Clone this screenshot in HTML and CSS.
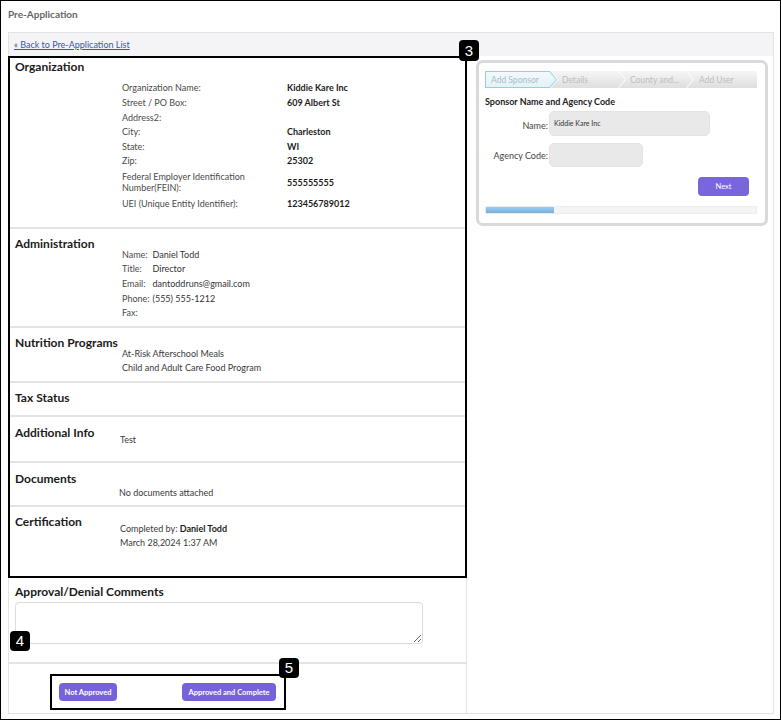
FILE: index.html
```html
<!DOCTYPE html>
<html lang="en">
<head>
<meta charset="utf-8">
<title>Pre-Application</title>
<link rel="stylesheet" href="styles.css">
</head>
<body>
<div class="frame">
  <h1 class="page-title">Pre-Application</h1>
  <div class="content">
    <div class="topbar"><a class="back-link" href="#">« Back to Pre-Application List</a></div>
    <div class="main">
      <div class="left">
        <div class="review">
          <section class="section s-org">
            <h2 class="section-title st-org">Organization</h2>
            <div class="section-body sb-org">
              <div class="kv">
                <div class="k">Organization Name:</div><div class="v">Kiddie Kare Inc</div>
                <div class="k">Street / PO Box:</div><div class="v">609 Albert St</div>
                <div class="k">Address2:</div><div class="v"></div>
                <div class="k">City:</div><div class="v">Charleston</div>
                <div class="k">State:</div><div class="v">WI</div>
                <div class="k">Zip:</div><div class="v">25302</div>
                <div class="k k-wrap">Federal Employer Identification Number(FEIN):</div><div class="v">555555555</div>
                <div class="k">UEI (Unique Entity Identifier):</div><div class="v">123456789012</div>
              </div>
            </div>
          </section>
          <section class="section s-admin">
            <h2 class="section-title">Administration</h2>
            <div class="section-body sb-admin">
              <div class="pairs">
                <div class="pk">Name:</div><div class="pv">Daniel Todd</div>
                <div class="pk">Title:</div><div class="pv">Director</div>
                <div class="pk">Email:</div><div class="pv">dantoddruns@gmail.com</div>
                <div class="pk">Phone:</div><div class="pv">(555) 555-1212</div>
                <div class="pk">Fax:</div><div class="pv"></div>
              </div>
            </div>
          </section>
          <section class="section s-nutr">
            <h2 class="section-title">Nutrition Programs</h2>
            <div class="section-body sb-nutr">
              <div class="line">At-Risk Afterschool Meals</div>
              <div class="line">Child and Adult Care Food Program</div>
            </div>
          </section>
          <section class="section s-tax">
            <h2 class="section-title">Tax Status</h2>
          </section>
          <section class="section s-addl">
            <h2 class="section-title st-low">Additional Info</h2>
            <div class="section-body sb-addl">
              <div class="line">Test</div>
            </div>
          </section>
          <section class="section s-docs">
            <h2 class="section-title st-low">Documents</h2>
            <div class="section-body sb-docs">
              <div class="line">No documents attached</div>
            </div>
          </section>
          <section class="section s-cert">
            <h2 class="section-title">Certification</h2>
            <div class="section-body sb-cert">
              <div class="cert-line">Completed by: <b>Daniel Todd</b></div>
              <div class="cert-line">March 28,2024 1:37 AM</div>
            </div>
          </section>
        </div>
        <h2 class="comments-title">Approval/Denial Comments</h2>
        <textarea class="comments"></textarea>
        <div class="divider"></div>
        <div class="actions">
          <button class="btn btn-deny">Not Approved</button>
          <button class="btn btn-approve">Approved and Complete</button>
        </div>
      </div>
      <div class="right">
        <div class="wizard">
          <div class="steps">
            <div class="step step-first step-active"><span>Add Sponsor</span></div>
            <div class="step step-mid"><span>Details</span></div>
            <div class="step step-mid"><span>County and...</span></div>
            <div class="step step-last"><span>Add User</span></div>
          </div>
          <h3 class="wiz-title">Sponsor Name and Agency Code</h3>
          <div class="form-row">
            <label class="form-label">Name:</label>
            <input class="field field-name" type="text" value="Kiddie Kare Inc">
          </div>
          <div class="form-row form-row-2">
            <label class="form-label">Agency Code:</label>
            <input class="field field-code" type="text" value="">
          </div>
          <div class="wiz-actions"><button class="btn btn-next">Next</button></div>
          <div class="progress"><div class="progress-fill"></div></div>
        </div>
      </div>
    </div>
  </div>
  <div class="badge badge-3">3</div>
  <div class="badge badge-4">4</div>
  <div class="badge badge-5">5</div>
</div>
</body>
</html>
```
FILE: styles.css
```css
* { box-sizing: border-box; }
html, body { margin: 0; padding: 0; background: #fff; }
body { font-family: Lato, "Open Sans", sans-serif; color: #333; }

.frame {
  position: relative;
  width: 781px;
  height: 720px;
  border: 1px solid #000;
  background: #fff;
  overflow: hidden;
}

.page-title {
  height: 31px;
  margin: 0;
  padding: 7px 0 0 7px;
  font-size: 10px;
  line-height: 12px;
  font-weight: 700;
  color: #666;
}

.content {
  margin-left: 7px;
  width: 766px;
  height: 682px;
  border: 1px solid #e3e3e3;
  background: #f4f4f6;
  display: flex;
  flex-direction: column;
}

.topbar {
  height: 23px;
  flex: none;
  padding-left: 5px;
  display: flex;
  align-items: center;
}
.back-link {
  font-size: 9px;
  color: #3a58a3;
  text-decoration: underline;
}

.main {
  flex: 1;
  display: flex;
  background: #fff;
  min-height: 0;
}

.left {
  width: 458px;
  flex: none;
  border-right: 1px solid #e3e3e3;
  display: flex;
  flex-direction: column;
}
.right { flex: 1; }

/* review box */
.review {
  margin-left: -1px;
  width: 459px;
  height: 522px;
  flex: none;
  border: 2px solid #000;
}
.section {
  display: flex;
  border-bottom: 2px solid #e4e4e4;
}
.section:last-child { border-bottom: none; }
.s-org { height: 171px; }
.s-admin { height: 99px; }
.s-nutr { height: 55px; }
.s-tax { height: 34px; }
.s-addl { height: 46px; }
.s-docs { height: 44px; }
.s-cert { height: 69px; }

.section-title {
  width: 112px;
  flex: none;
  margin: 0;
  padding: 7px 0 0 5px;
  font-size: 12px;
  line-height: 16px;
  font-weight: 700;
  color: #1a1a1a;
  white-space: nowrap;
}
.st-org { padding-top: 1px; }
.st-low { padding-top: 8px; }

.section-body {
  font-size: 9px;
  color: #444;
}
.sb-org { padding-top: 22.7px; }
.sb-admin { padding-top: 18.6px; }
.sb-nutr { padding-top: 18.6px; }
.sb-addl { padding-top: 15.6px; margin-left: -2px; }
.sb-docs { padding-top: 22.6px; margin-left: -3px; }
.sb-cert { padding-top: 14.5px; margin-left: -2px; }

.kv {
  display: grid;
  grid-template-columns: 150px auto;
  column-gap: 15px;
  align-items: center;
}
.k {
  line-height: 11px;
  padding: 1.8px 0;
  color: #4a4a4a;
}
.k-wrap { padding: 3px 0; }
.v {
  line-height: 11px;
  font-weight: 700;
  color: #1c1c1c;
}

.pairs {
  display: grid;
  grid-template-columns: auto auto;
  column-gap: 3px;
  justify-content: start;
}
.pk, .pv { line-height: 14.7px; }
.pk { color: #4a4a4a; }
.pv { color: #333; }

.line { line-height: 14.7px; color: #3a3a3a; }
.cert-line { line-height: 14px; color: #3a3a3a; }
.cert-line b { color: #1c1c1c; }

/* comments */
.comments-title {
  margin: 6px 0 0 6px;
  font-size: 12px;
  line-height: 16px;
  font-weight: 700;
  color: #1a1a1a;
}
.comments {
  display: block;
  margin: 2px 0 0 6px;
  width: 408px;
  height: 42px;
  border: 1px solid #dcdcdc;
  border-radius: 4px;
  background: #fff;
  font-family: Lato, sans-serif;
  font-size: 9px;
  outline: none;
}
.divider {
  margin-top: 18px;
  height: 2px;
  background: #e4e4e4;
}
.actions {
  margin: 10px 0 0 41px;
  width: 236px;
  height: 36px;
  border: 2px solid #000;
  display: flex;
  align-items: center;
  justify-content: space-between;
  padding: 0 8px 0 7px;
}

.btn {
  height: 18px;
  padding: 0;
  border: none;
  border-radius: 4px;
  background: #7762dc;
  color: #fff;
  font-family: Lato, sans-serif;
  font-size: 7.5px;
  font-weight: 700;
}
.btn-deny { width: 58px; }
.btn-approve { width: 94px; }

/* wizard */
.wizard {
  margin: 4px 0 0 9px;
  width: 292px;
  height: 166px;
  border: 3px solid #d9d9d9;
  border-radius: 7px;
  padding: 8px 8px 0 6px;
  background: #fff;
}
.steps {
  display: flex;
  height: 17px;
}
.step {
  position: relative;
  flex: none;
  height: 17px;
  display: flex;
  align-items: center;
  font-size: 8.5px;
  color: #bdbdbd;
  background: linear-gradient(#f6f6f6, #dedede);
  white-space: nowrap;
  margin-right: -6px;
}
.step span { position: relative; }
.step-first {
  width: 72px;
  padding-left: 6px;
  clip-path: polygon(0 0, calc(100% - 7px) 0, 100% 50%, calc(100% - 7px) 100%, 0 100%);
}
.step-mid {
  width: 74px;
  padding-left: 11px;
  clip-path: polygon(0 0, calc(100% - 7px) 0, 100% 50%, calc(100% - 7px) 100%, 0 100%, 7px 50%);
}
.step-last {
  width: 70px;
  margin-right: 0;
  padding-left: 12px;
  clip-path: polygon(0 0, 100% 0, 100% 100%, 0 100%, 7px 50%);
}
.step-active {
  background: #8fd0e6;
  color: #a6bfc9;
}
.step-active::before {
  content: "";
  position: absolute;
  top: 1px;
  left: 1px;
  right: 1px;
  bottom: 1px;
  background: linear-gradient(#f3f9fb, #e4f1f6);
  clip-path: polygon(0 0, calc(100% - 6.5px) 0, 100% 50%, calc(100% - 6.5px) 100%, 0 100%);
}

.wiz-title {
  margin: 8px 0 0;
  font-size: 9px;
  line-height: 12px;
  font-weight: 700;
  color: #222;
}
.form-row {
  display: flex;
  align-items: center;
  margin-top: 3px;
}
.form-row-2 { margin-top: 7px; }
.form-label {
  width: 64px;
  flex: none;
  text-align: right;
  padding-right: 1px;
  padding-top: 3px;
  font-size: 9px;
  color: #444;
}
.form-row-2 .form-label { padding-top: 0; }
.field {
  height: 25px;
  border: 1px solid #e3e3e3;
  border-radius: 5px;
  background: #e9e9e9;
  padding: 0 0 2px 4px;
  font-family: Lato, sans-serif;
  font-size: 7px;
  color: #333;
  outline: none;
}
.field-name { width: 161px; }
.field-code { width: 94px; height: 24px; }

.wiz-actions {
  display: flex;
  justify-content: flex-end;
  margin-top: 10px;
  padding-right: 8px;
}
.btn-next {
  width: 51px;
  height: 19px;
  font-weight: 400;
  background: #7a66dc;
}

.progress {
  margin-top: 10px;
  width: 272px;
  height: 8px;
  border: 1px solid #ececec;
  background: #f4f4f4;
  border-radius: 1px;
}
.progress-fill {
  width: 68px;
  height: 100%;
  background: linear-gradient(#9ccbed, #72b1e2);
}

/* annotation badges */
.badge {
  position: absolute;
  width: 20px;
  height: 20px;
  border-radius: 4px;
  background: #000;
  color: #fff;
  font-family: "Liberation Sans", Arial, sans-serif;
  font-size: 15px;
  line-height: 20px;
  text-align: center;
}
.badge-3 { left: 458px; top: 39px; height: 21px; line-height: 21px; }
.badge-4 { left: 9px; top: 630px; }
.badge-5 { left: 278px; top: 657px; }
```
